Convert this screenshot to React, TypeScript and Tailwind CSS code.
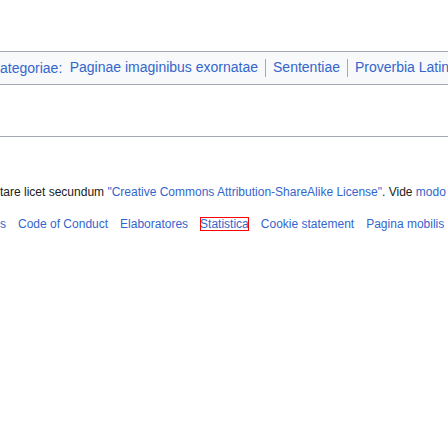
export default function App() {
  return (
    <div
      className="w-[448px] h-[448px] overflow-hidden bg-white pt-[51px]"
      style={{ fontFamily: '"Liberation Sans", Arial, sans-serif' }}
    >
      <div className="border-y border-[#a2a9b1] bg-[#f8f9fa] py-[5px]">
        <div className="flex items-center whitespace-nowrap text-[14px] leading-[22px] text-[#202122]">
          <a className="text-[#3366cc]">ategoriae:</a>
          <span className="ml-[7.4px] pr-[7px] leading-[17.5px] text-[#3366cc]">
            Paginae imaginibus exornatae
          </span>
          <span className="border-l border-[#a2a9b1] px-[7px] leading-[17.5px] text-[#3366cc]">
            Sententiae
          </span>
          <span className="border-l border-[#a2a9b1] px-[7px] leading-[17.5px] text-[#3366cc]">
            Proverbia Latina
          </span>
        </div>
      </div>
      <div className="mt-[51px] border-t border-[#a2a9b1]" />
      <div className="mt-[46px] whitespace-nowrap text-[12px] leading-[18px] text-[#202122]">
        tare licet secundum{" "}
        <a className="text-[#3366cc]">"Creative Commons Attribution-ShareAlike License"</a>. Vide{" "}
        <a className="text-[#3366cc]">modo utendi</a>.
      </div>
      <div className="mt-[14px] flex gap-3 whitespace-nowrap text-[12px] leading-[18px] text-[#3366cc]">
        <span>s</span>
        <span>Code of Conduct</span>
        <span>Elaboratores</span>
        <span>
          <span className="outline outline-1 outline-[#ff0000] outline-offset-[-1px]">Statistica</span>
        </span>
        <span>Cookie statement</span>
        <span>Pagina mobilis</span>
      </div>
    </div>
  );
}
